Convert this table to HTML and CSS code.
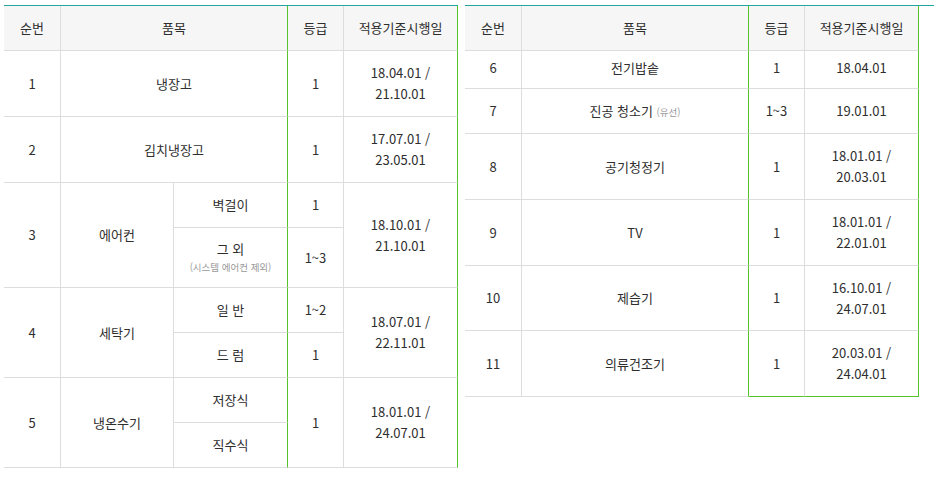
FILE: index.html
```html
<!DOCTYPE html>
<html lang="ko">
<head>
<meta charset="utf-8">
<link rel="stylesheet" href="styles.css">
</head>
<body>
<div class="page">
  <div class="panel panel-left">
    <div class="grid grid-left">
      <div class="cell head">순번</div>
      <div class="cell head span-c2 gr">품목</div>
      <div class="cell head">등급</div>
      <div class="cell head gr">적용기준시행일</div>

      <div class="cell">1</div>
      <div class="cell span-c2 gr">냉장고</div>
      <div class="cell">1</div>
      <div class="cell gr"><span>18.04.01 /</span><span>21.10.01</span></div>

      <div class="cell">2</div>
      <div class="cell span-c2 gr">김치냉장고</div>
      <div class="cell">1</div>
      <div class="cell gr"><span>17.07.01 /</span><span>23.05.01</span></div>

      <div class="cell span-r2">3</div>
      <div class="cell span-r2">에어컨</div>
      <div class="cell gr">벽걸이</div>
      <div class="cell">1</div>
      <div class="cell span-r2 gr"><span>18.10.01 /</span><span>21.10.01</span></div>
      <div class="cell gr"><span>그 외</span><span class="note">(시스템 에어컨 제외)</span></div>
      <div class="cell">1~3</div>

      <div class="cell span-r2">4</div>
      <div class="cell span-r2">세탁기</div>
      <div class="cell gr">일 반</div>
      <div class="cell">1~2</div>
      <div class="cell span-r2 gr"><span>18.07.01 /</span><span>22.11.01</span></div>
      <div class="cell gr">드 럼</div>
      <div class="cell">1</div>

      <div class="cell span-r2">5</div>
      <div class="cell span-r2">냉온수기</div>
      <div class="cell gr">저장식</div>
      <div class="cell span-r2">1</div>
      <div class="cell span-r2 gr"><span>18.01.01 /</span><span>24.07.01</span></div>
      <div class="cell gr">직수식</div>
    </div>
  </div>

  <div class="panel panel-right">
    <div class="grid grid-right">
      <div class="cell head">순번</div>
      <div class="cell head gr">품목</div>
      <div class="cell head">등급</div>
      <div class="cell head gr">적용기준시행일</div>

      <div class="cell lift">6</div>
      <div class="cell gr lift">전기밥솥</div>
      <div class="cell lift">1</div>
      <div class="cell gr lift">18.04.01</div>

      <div class="cell">7</div>
      <div class="cell gr"><span>진공 청소기 <span class="note">(유선)</span></span></div>
      <div class="cell">1~3</div>
      <div class="cell gr">19.01.01</div>

      <div class="cell">8</div>
      <div class="cell gr">공기청정기</div>
      <div class="cell">1</div>
      <div class="cell gr"><span>18.01.01 /</span><span>20.03.01</span></div>

      <div class="cell">9</div>
      <div class="cell gr">TV</div>
      <div class="cell">1</div>
      <div class="cell gr"><span>18.01.01 /</span><span>22.01.01</span></div>

      <div class="cell">10</div>
      <div class="cell gr">제습기</div>
      <div class="cell">1</div>
      <div class="cell gr"><span>16.10.01 /</span><span>24.07.01</span></div>

      <div class="cell">11</div>
      <div class="cell gr">의류건조기</div>
      <div class="cell gb">1</div>
      <div class="cell gr gb"><span>20.03.01 /</span><span>24.04.01</span></div>
    </div>
  </div>
</div>
</body>
</html>
```

FILE: styles.css
```css
* { box-sizing: border-box; }

html, body {
  margin: 0;
  padding: 0;
  background: #fff;
}

body {
  font-family: "Noto Sans CJK KR", "Noto Sans", sans-serif;
  font-size: 13px;
  color: #2e2e2e;
  overflow: hidden;
}

.page {
  display: flex;
  align-items: flex-start;
  gap: 7px;
  padding: 5px 0 0 4px;
}

.panel {
  border-top: 1px solid #22a79c;
}

.panel-left {
  width: 454px;
  flex: none;
}

.panel-right {
  flex: 1;
}

.grid {
  display: grid;
  width: 454px;
}

.grid-left {
  grid-template-columns: 57px 113px 114px 56px 114px;
  grid-template-rows: 45px 66px 66px 45px 60px 45px 45px 45px 45px;
}

.grid-right {
  grid-template-columns: 57px 227px 56px 114px;
  grid-template-rows: 45px 38px 45px 66px 66px 65px 66px;
}

.cell {
  display: flex;
  flex-direction: column;
  align-items: center;
  justify-content: center;
  text-align: center;
  line-height: 21px;
  padding-bottom: 1px;
  border-right: 1px solid #dddddd;
  border-bottom: 1px solid #dddddd;
  white-space: nowrap;
}

.head {
  background: #f6f6f6;
}

.span-c2 { grid-column: span 2; }
.span-r2 { grid-row: span 2; }

.gr { border-right-color: #55c32a; }
.gb { border-bottom-color: #55c32a; }

.lift { padding-bottom: 5px; }

.note {
  font-size: 9.5px;
  line-height: 17px;
  color: #999;
}
```
